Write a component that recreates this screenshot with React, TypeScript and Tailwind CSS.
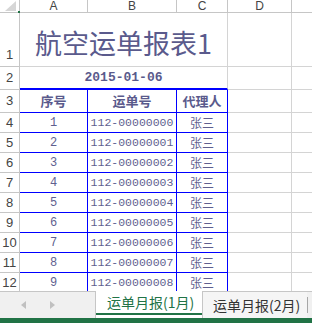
import React from 'react'

const cjk = { fontFamily: '"Noto Sans CJK SC", "Liberation Sans", sans-serif' }
const mono = { fontFamily: '"Liberation Mono", "Noto Sans CJK SC", monospace' }
const head = { fontFamily: '"Liberation Sans", "Noto Sans CJK SC", sans-serif' }

const rows = Array.from({ length: 9 }, (_, i) => ({
  id: i + 1,
  no: `112-${String(i).padStart(8, '0')}`,
  agent: '张三',
}))

function RowHead({ n, end }: { n: number; end?: boolean }) {
  return (
    <div
      style={head}
      className={`flex w-[20px] shrink-0 justify-center border-r border-b border-[#c6c6c6] text-[13px] font-normal text-[#444] ${
        end ? 'items-end pb-[2px]' : 'items-center'
      }`}
    >
      {n}
    </div>
  )
}

function Grid() {
  return (
    <div className="flex h-[291px] flex-col overflow-hidden">
      {/* column headers */}
      <div style={head} className="flex h-[13px] shrink-0 text-[12px] leading-[12px] text-[#444]">
        <div className="relative w-[20px] border-r border-b border-[#c6c6c6]">
          <svg className="absolute top-[1px] left-[5px]" width="11" height="10" viewBox="0 0 11 10">
            <path d="M11 0 L11 10 L0 10 Z" fill="#d6d6d6" />
          </svg>
          <div className="absolute right-[-1px] bottom-[-1px] h-[2px] w-[2px] bg-[#217346]" />
        </div>
        <div className="flex w-[68px] justify-center border-r border-b border-[#c6c6c6]">A</div>
        <div className="flex w-[89px] justify-center border-r border-b border-[#c6c6c6]">B</div>
        <div className="flex w-[51px] justify-center border-r border-b border-[#c6c6c6]">C</div>
        <div className="flex w-[64px] justify-center border-r border-b border-[#c6c6c6]">D</div>
        <div className="flex-1 border-b border-[#c6c6c6]" />
      </div>

      {/* row 1: title */}
      <div className="flex h-[54px] shrink-0">
        <RowHead n={1} end />
        <div
          style={cjk}
          className="flex w-[208px] justify-center border-r border-b border-[#d4d4d4] pt-[16px] text-[27px] leading-[27px] font-normal text-[#5a5a8c]"
        >
          航空运单报表1
        </div>
        <div className="w-[64px] border-r border-b border-[#d4d4d4]" />
        <div className="flex-1 border-b border-[#d4d4d4]" />
      </div>

      {/* row 2: date */}
      <div className="flex h-[23px] shrink-0">
        <RowHead n={2} />
        <div
          style={mono}
          className="flex w-[208px] items-center justify-center border-r border-r-[#d4d4d4] border-b-2 border-b-[#0000ff] text-[13px] font-bold text-[#5a5a8c]"
        >
          2015-01-06
        </div>
        <div className="w-[64px] border-r border-b border-[#d4d4d4]" />
        <div className="flex-1 border-b border-[#d4d4d4]" />
      </div>

      {/* row 3: table header */}
      <div className="flex h-[23px] shrink-0">
        <RowHead n={3} />
        <div style={cjk} className="flex w-[208px] text-[13px] font-bold text-[#5a5a8c]">
          <div className="flex w-[68px] items-center justify-center border-r border-b border-[#0000ff]">序号</div>
          <div className="flex w-[89px] items-center justify-center border-r border-b border-[#0000ff]">运单号</div>
          <div className="flex w-[51px] items-center justify-center border-r border-b border-[#0000ff]">代理人</div>
        </div>
        <div className="w-[64px] border-r border-b border-[#d4d4d4]" />
        <div className="flex-1 border-b border-[#d4d4d4]" />
      </div>

      {rows.map((r) => (
        <div key={r.id} className="flex h-[20px] shrink-0 text-[#5f5f8f]">
          <RowHead n={r.id + 3} />
          <div
            style={mono}
            className="flex w-[68px] items-center justify-center border-r border-b border-[#0000ff] text-[12px]"
          >
            {r.id}
          </div>
          <div
            style={mono}
            className="flex w-[89px] items-center justify-center border-r border-b border-[#0000ff] text-[11.5px]"
          >
            {r.no}
          </div>
          <div
            style={cjk}
            className="flex w-[51px] items-center justify-center border-r border-b border-[#0000ff] text-[12px]"
          >
            {r.agent}
          </div>
          <div className="w-[64px] border-r border-b border-[#d4d4d4]" />
          <div className="flex-1 border-b border-[#d4d4d4]" />
        </div>
      ))}
    </div>
  )
}

function SheetTabs() {
  return (
    <div className="flex h-[27px] shrink-0" style={cjk}>
      <div className="flex w-[96px] items-center gap-[24px] border-t border-r border-[#c6c6c6] bg-[#f0f0f0] pl-[21px]">
        <div className="h-0 w-0 border-y-[4px] border-r-[5px] border-y-transparent border-r-[#c0c0c0]" />
        <div className="h-0 w-0 border-y-[4px] border-l-[5px] border-y-transparent border-l-[#c0c0c0]" />
      </div>
      <div className="flex w-[106px] flex-col bg-white">
        <div className="flex flex-1 items-center pl-[11px] text-[14px] leading-none text-[#217346]">运单月报(1月)</div>
        <div className="h-[2px] bg-[#217346]" />
        <div className="h-[3px]" />
      </div>
      <div className="flex w-[105px] items-center border-t border-l border-[#c6c6c6] bg-[#f5f5f5] pl-[10px] text-[14px] leading-none text-[#333]">
        运单月报(2月)
      </div>
      <div className="flex flex-1 items-center border-t border-[#c6c6c6] bg-[#f0f0f0]">
        <div className="h-[16px] w-px bg-[#a6a6a6]" />
      </div>
    </div>
  )
}

export default function App() {
  return (
    <div className="flex h-[323px] w-[312px] flex-col overflow-hidden bg-white">
      <Grid />
      <SheetTabs />
      <div className="h-[5px] shrink-0 bg-[#217346]" />
    </div>
  )
}
